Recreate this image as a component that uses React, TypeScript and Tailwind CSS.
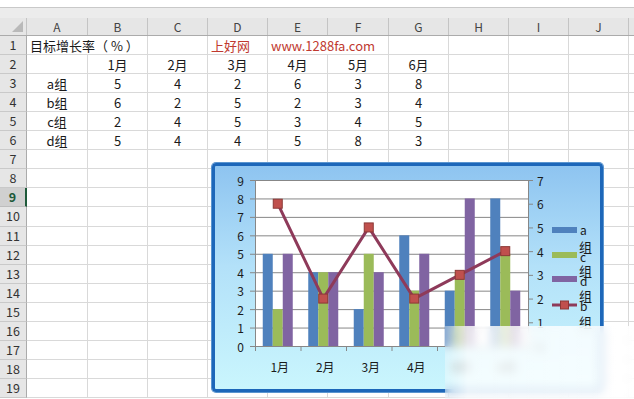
import React from "react";

const months = ["1月", "2月", "3月", "4月", "5月", "6月"];
const groups: [string, number[]][] = [
  ["a组", [5, 4, 2, 6, 3, 8]],
  ["b组", [6, 2, 5, 2, 3, 4]],
  ["c组", [2, 4, 5, 3, 4, 5]],
  ["d组", [5, 4, 4, 5, 8, 3]],
];

const colCls = [
  "w-[61px]",
  "w-[60px]",
  "w-[60px]",
  "w-[60px]",
  "w-[60px]",
  "w-[61px]",
  "w-[60px]",
  "w-[60px]",
  "w-[60px]",
  "w-[60px]",
  "w-[10px]",
];
const colL = ["A", "B", "C", "D", "E", "F", "G", "H", "I", "J", ""];

type CellDef = { text?: string; w: string; left?: boolean; red?: boolean };

function rowCells(r: number): CellDef[] {
  const blanks = (from: number): CellDef[] => colCls.slice(from).map((w) => ({ w }));
  if (r === 1) {
    return [
      { text: "目标增长率（ % ）", w: "w-[121px]", left: true },
      { w: colCls[2] },
      { text: "上好网", w: colCls[3], left: true, red: true },
      { text: "www.1288fa.com", w: "w-[121px]", left: true, red: true },
      ...blanks(6),
    ];
  }
  if (r === 2) {
    return [{ w: colCls[0] }, ...months.map((m, i) => ({ text: m, w: colCls[i + 1] })), ...blanks(7)];
  }
  if (r >= 3 && r <= 6) {
    const [g, vals] = groups[r - 3];
    return [
      { text: g, w: colCls[0] },
      ...vals.map((v, i) => ({ text: String(v), w: colCls[i + 1] })),
      ...blanks(7),
    ];
  }
  return blanks(0);
}

function Sheet() {
  const rows = Array.from({ length: 19 }, (_, i) => i + 1);
  return (
    <div className="flex flex-col">
      <div className="h-[7px] bg-white" />
      <div className="h-[11px] bg-[#ececec] border-t border-[#c9c9c9]" />
      <div className="flex h-[18px] bg-[#e6e6e6] border-b border-[#ababab]">
        <div className="w-[27px] shrink-0 border-r border-[#c4c4c4] relative">
          <div className="absolute right-[3px] bottom-[3px] w-0 h-0 border-l-[11px] border-l-transparent border-b-[11px] border-b-[#b9b9b9]" />
        </div>
        {colCls.map((w, i) => (
          <div
            key={i}
            className={
              w +
              " shrink-0 border-r border-[#c4c4c4] flex items-center justify-center text-[12px] text-[#444] leading-none"
            }
          >
            {colL[i]}
          </div>
        ))}
      </div>
      {rows.map((r) => (
        <div key={r} className={"flex " + (r === 10 ? "h-[20px]" : "h-[19px]")}>
          <div
            className={
              "w-[27px] shrink-0 flex items-center justify-center text-[12.5px] leading-none border-b " +
              (r === 9
                ? "bg-[#d0d0d0] text-[#1e5a3a] font-semibold border-r-2 border-r-[#1e5a3a] border-b-[#bdbdbd]"
                : "bg-[#e6e6e6] text-[#333] border-r border-r-[#ababab] border-b-[#c9c9c9]")
            }
          >
            {r}
          </div>
          {rowCells(r).map((c, k) => (
            <div
              key={k}
              className={
                c.w +
                " shrink-0 border-r border-b border-[#d9d9d9] flex items-center whitespace-nowrap text-[13px] leading-none " +
                (c.left ? "justify-start pl-[3px] " : "justify-center ") +
                (c.red ? "text-[#c0392f]" : "text-[#1a1a1a]")
              }
            >
              {c.text}
            </div>
          ))}
        </div>
      ))}
    </div>
  );
}

function Chart() {
  const PL = 255,
    PR = 528,
    PT = 180,
    PB = 346;
  const cw = (PR - PL) / 6;
  const yL = (v: number) => PB - (v * (PB - PT)) / 9;
  const yR = (v: number) => PB - (v * (PB - PT)) / 7;
  const cx = (k: number) => PL + cw * (k + 0.5);
  const a = groups[0][1],
    b = groups[1][1],
    c = groups[2][1],
    d = groups[3][1];
  const BLUE = "#4f81bd",
    GREEN = "#9bbb59",
    PURPLE = "#8064a2",
    LINE = "#8e3a5a",
    MK = "#c0504d",
    MKB = "#8c3836";
  const t = "text-[12px] fill-[#1a1a1a]";
  const tz = "text-[13px] fill-[#1a1a1a]";
  const linePts = b.map((v, k) => `${cx(k)},${yR(v)}`).join(" ");
  return (
    <div className="absolute left-[212px] top-[163px] w-[391px] h-[229px] rounded-[4px] border-[3px] border-[#1d67b9] bg-[linear-gradient(to_bottom,#8ec4f0_0%,#b3e1f9_45%,#caf6fd_100%)] shadow-[0_0_0_1px_#5b95cf]">
      <svg className="absolute -left-[3px] -top-[3px]" width={391} height={229} viewBox="212 163 391 229">
        <rect x={PL} y={PT} width={PR - PL} height={PB - PT} fill="#fff" />
        {Array.from({ length: 10 }, (_, v) => (
          <line key={v} x1={PL - 5} x2={PR} y1={yL(v) + 0.5} y2={yL(v) + 0.5} stroke="#878787" strokeWidth={1} />
        ))}
        {Array.from({ length: 8 }, (_, v) => (
          <line key={v} x1={PR} x2={PR + 5} y1={yR(v) + 0.5} y2={yR(v) + 0.5} stroke="#878787" strokeWidth={1} />
        ))}
        {Array.from({ length: 7 }, (_, k) => (
          <line
            key={k}
            x1={PL + cw * k + 0.5}
            x2={PL + cw * k + 0.5}
            y1={PB}
            y2={PB + 5}
            stroke="#878787"
            strokeWidth={1}
          />
        ))}
        <line x1={PL + 0.5} x2={PL + 0.5} y1={PT} y2={PB} stroke="#878787" />
        <line x1={PR + 0.5} x2={PR + 0.5} y1={PT} y2={PB} stroke="#878787" />
        {a.map((_, k) => {
          const x = cx(k);
          return (
            <g key={k}>
              <rect x={x - 15} y={yL(a[k])} width={10} height={PB - yL(a[k])} fill={BLUE} />
              <rect x={x - 5} y={yL(c[k])} width={10} height={PB - yL(c[k])} fill={GREEN} />
              <rect x={x + 5} y={yL(d[k])} width={10} height={PB - yL(d[k])} fill={PURPLE} />
            </g>
          );
        })}
        <polyline points={linePts} fill="none" stroke={LINE} strokeWidth={3} strokeLinejoin="round" />
        {b.map((v, k) => (
          <rect key={k} x={cx(k) - 4.5} y={yR(v) - 4.5} width={9} height={9} fill={MK} stroke={MKB} strokeWidth={1} />
        ))}
        {Array.from({ length: 10 }, (_, v) => (
          <text key={v} x={244} y={yL(v)} textAnchor="end" dominantBaseline="central" className={t}>
            {v}
          </text>
        ))}
        {Array.from({ length: 8 }, (_, v) => (
          <text key={v} x={537} y={yR(v)} textAnchor="start" dominantBaseline="central" className={t}>
            {v}
          </text>
        ))}
        {months.map((m, k) => (
          <text key={k} x={cx(k) + 2} y={366} textAnchor="middle" dominantBaseline="central" className={t}>
            {m}
          </text>
        ))}
        <rect x={552} y={227} width={25} height={6} fill={BLUE} />
        <text x={580} y={229} dominantBaseline="central" className={t}>a</text>
        <text x={579} y={246} dominantBaseline="central" className={tz}>组</text>
        <rect x={552} y={252} width={25} height={6} fill={GREEN} />
        <text x={580} y={256} dominantBaseline="central" className={t}>c</text>
        <text x={579} y={270} dominantBaseline="central" className={tz}>组</text>
        <rect x={552} y={276} width={25} height={6} fill={PURPLE} />
        <text x={580} y={280} dominantBaseline="central" className={t}>d</text>
        <text x={579} y={295} dominantBaseline="central" className={tz}>组</text>
        <line x1={552} x2={577} y1={305} y2={305} stroke={LINE} strokeWidth={3} />
        <rect x={560.5} y={301} width={8} height={8} fill={MK} stroke={MKB} strokeWidth={1} />
        <text x={580} y={305} dominantBaseline="central" className={t}>b</text>
        <text x={579} y={321} dominantBaseline="central" className={tz}>组</text>
      </svg>
    </div>
  );
}

export default function App() {
  return (
    <div className="relative w-[634px] h-[399px] overflow-hidden bg-white font-['Noto_Sans_CJK_SC','Noto_Sans',sans-serif]">
      <Sheet />
      <Chart />
      <div className="absolute left-[445px] top-[326px] right-0 bottom-0 backdrop-blur-[5px] bg-[linear-gradient(to_right,rgba(255,255,255,0.35),rgba(255,255,255,0.78)_12%,rgba(255,255,255,0.82))]" />
    </div>
  );
}
